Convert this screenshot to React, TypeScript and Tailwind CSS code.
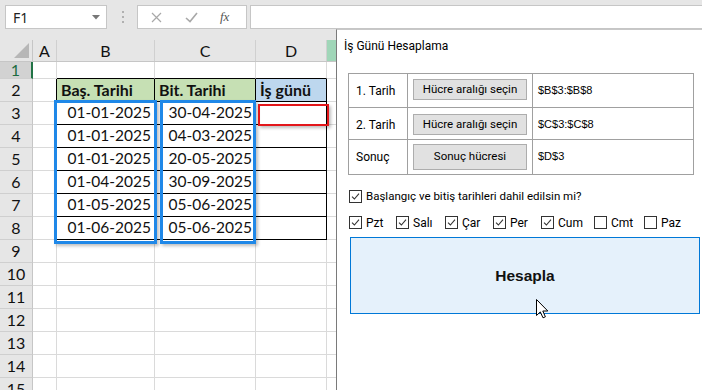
import React from "react";

// column widths in the sheet: A, B, C, D, E (E is mostly under the form)
const COLS = [
  { key: "A", w: 24 },
  { key: "B", w: 98 },
  { key: "C", w: 101 },
  { key: "D", w: 71 },
  { key: "E", w: 60 },
];

const ROW_HEIGHTS = [17, 23, 23, 23, 23, 23, 23, 23, 23, 23, 23, 23, 23, 23, 23];

const START_DATES = ["01-01-2025", "01-01-2025", "01-01-2025", "01-04-2025", "01-05-2025", "01-06-2025"];
const END_DATES = ["30-04-2025", "04-03-2025", "20-05-2025", "30-09-2025", "05-06-2025", "05-06-2025"];

const DAYS = [
  { label: "Pzt", checked: true, w: 47 },
  { label: "Salı", checked: true, w: 49 },
  { label: "Çar", checked: true, w: 48 },
  { label: "Per", checked: true, w: 48 },
  { label: "Cum", checked: true, w: 53 },
  { label: "Cmt", checked: false, w: 50 },
  { label: "Paz", checked: false, w: 50 },
];

const isTableCol = (c: string) => c === "B" || c === "C" || c === "D";

const Cell: React.FC<{ row: number; col: string; w: number; h: number }> = ({ row, col, w, h }) => {
  const inTable = row >= 2 && row <= 8 && isTableCol(col);
  const blackRight = inTable || (col === "A" && row >= 2 && row <= 8);
  const blackBottom = inTable || (row === 1 && isTableCol(col));

  let bg = "bg-white";
  let content: React.ReactNode = null;

  if (row === 2 && col === "B") {
    bg = "bg-[#c6e0b4]";
    content = "Baş. Tarihi";
  } else if (row === 2 && col === "C") {
    bg = "bg-[#c6e0b4]";
    content = "Bit. Tarihi";
  } else if (row === 2 && col === "D") {
    bg = "bg-[#bdd7ee]";
    content = "İş günü";
  } else if (row >= 3 && row <= 8 && col === "B") {
    content = START_DATES[row - 3];
  } else if (row >= 3 && row <= 8 && col === "C") {
    content = END_DATES[row - 3];
  }

  const isHeader = row === 2 && content;

  return (
    <div
      className={`shrink-0 flex items-center border-r border-b ${bg} ${
        blackRight ? "border-r-black" : "border-r-[#dadada]"
      } ${blackBottom ? "border-b-black" : "border-b-[#dadada]"} ${
        isHeader ? "justify-start pl-[4px] font-bold text-[16px]" : "justify-end pr-[3px] text-[15.5px]"
      }`}
      style={{ width: w, height: h }}
    >
      {content}
    </div>
  );
};

const CheckBox: React.FC<{ checked: boolean }> = ({ checked }) => (
  <span className="w-[13px] h-[13px] border border-[#333333] bg-white flex items-center justify-center shrink-0">
    {checked && (
      <svg width="9" height="9" viewBox="0 0 9 9">
        <path d="M1 4.6 L3.4 7 L8 1.6" fill="none" stroke="#333333" strokeWidth="1.1" />
      </svg>
    )}
  </span>
);

const FormButton: React.FC<{ label: string; h: number; mt: number }> = ({ label, h, mt }) => (
  <div
    className="w-[114px] bg-[#e1e1e1] border border-[#adadad] flex items-center justify-center text-[11.5px] text-black"
    style={{ height: h, marginTop: mt }}
  >
    {label}
  </div>
);

const FrameRow: React.FC<{ label: string; button: string; value: string; h: number; btnH: number; btnTop: number; last?: boolean }> = ({
  label,
  button,
  value,
  h,
  btnH,
  btnTop,
  last,
}) => (
  <div className={`flex ${last ? "" : "border-b border-[#a0a0a0]"}`} style={{ height: h }}>
    <div className="w-[59px] border-r border-[#a0a0a0] pl-[7px] pt-[8px] text-[12px]">{label}</div>
    <div className="w-[125px] border-r border-[#a0a0a0] pl-[5px]">
      <FormButton label={button} h={btnH} mt={btnTop} />
    </div>
    <div className="flex-1 pl-[5px] pt-[8px] text-[11px] font-['Liberation_Sans',sans-serif]">{value}</div>
  </div>
);

export default function App() {
  return (
    <div className="w-[702px] h-[390px] overflow-hidden relative bg-white font-['Lato',sans-serif] text-[#111]">
      {/* formula bar */}
      <div className="h-[40px] bg-[#e6e6e6] flex items-start pt-[5px] pl-[5px] font-['Noto_Sans',sans-serif]">
        <div className="w-[102px] h-[24px] bg-white border border-[#c6c6c6] flex items-center justify-between pl-[7px] pr-[6px]">
          <span className="text-[14px] text-[#222]">F1</span>
          <svg width="8" height="5" viewBox="0 0 8 5">
            <path d="M0 0 L8 0 L4 4.5 Z" fill="#777" />
          </svg>
        </div>
        <div className="ml-[15px] mt-[6px] flex flex-col gap-[3px]">
          <span className="w-[2px] h-[2px] bg-[#b0b0b0]" />
          <span className="w-[2px] h-[2px] bg-[#b0b0b0]" />
          <span className="w-[2px] h-[2px] bg-[#b0b0b0]" />
        </div>
        <div className="ml-[13px] w-[110px] h-[24px] bg-white border border-[#c6c6c6] flex items-center">
          <svg className="ml-[13px]" width="11" height="11" viewBox="0 0 11 11">
            <path d="M1 1 L10 10 M10 1 L1 10" stroke="#a8a8a8" strokeWidth="1.2" />
          </svg>
          <svg className="ml-[23px]" width="13" height="11" viewBox="0 0 13 11">
            <path d="M1 6 L5 9.5 L12 1" fill="none" stroke="#a8a8a8" strokeWidth="1.6" />
          </svg>
          <span className="ml-[22px] text-[13px] italic text-[#555] font-['Liberation_Serif',serif]">fx</span>
        </div>
        <div className="ml-[3px] flex-1 h-[24px] bg-white border border-[#c6c6c6] -mr-[4px]" />
      </div>

      {/* column headers */}
      <div className="flex h-[22px] bg-[#e6e6e6] border-b border-[#c6c6c6]">
        <div className="w-[33px] shrink-0 border-r border-[#c6c6c6] relative">
          <svg className="absolute right-[3px] bottom-[3px]" width="15" height="15" viewBox="0 0 15 15">
            <path d="M15 0 L15 15 L0 15 Z" fill="#b7b7b7" />
          </svg>
        </div>
        {COLS.map((c) => (
          <div
            key={c.key}
            className={`shrink-0 flex items-center justify-center text-[16px] border-r border-[#d0d0d0] ${
              c.key === "E" ? "bg-[#a0d6b8]" : ""
            }`}
            style={{ width: c.w }}
          >
            {c.key === "E" ? "" : c.key}
          </div>
        ))}
      </div>

      {/* rows */}
      {ROW_HEIGHTS.map((h, i) => {
        const row = i + 1;
        return (
          <div key={row} className="flex">
            <div
              className={`w-[33px] shrink-0 flex items-center justify-center text-[16px] border-b border-[#cfcfcf] ${
                row === 1
                  ? "bg-[#d2d2d2] border-r-2 border-r-[#217346] text-[#1e6b41]"
                  : "bg-[#e6e6e6] border-r border-r-[#c6c6c6]"
              }`}
              style={{ height: h }}
            >
              {row}
            </div>
            {COLS.map((c) => (
              <Cell key={c.key} row={row} col={c.key} w={c.w} h={h} />
            ))}
          </div>
        );
      })}

      {/* range highlights */}
      <div className="absolute left-[54px] top-[100px] w-[103px] h-[144px] border-[3px] border-[#1f88e8] shadow-[2px_2px_3px_rgba(0,0,0,0.25)]" />
      <div className="absolute left-[160px] top-[100px] w-[96px] h-[144px] border-[3px] border-[#1f88e8] shadow-[2px_2px_3px_rgba(0,0,0,0.25)]" />
      <div className="absolute left-[258px] top-[104px] w-[71px] h-[22px] border-[2.5px] border-[#e3171b] shadow-[2px_2px_3px_rgba(0,0,0,0.25)]" />

      {/* user form window */}
      <div className="absolute left-[336px] top-[29px] right-0 bottom-0 bg-white border-l border-l-[#7a7a7a] border-t border-t-[#c8c8c8] font-['Roboto',sans-serif] text-black">
        <div className="pt-[8px] pl-[7px] h-[24px] text-[12px] leading-[16px]">İş Günü Hesaplama</div>

        <div className="ml-[11px] mt-[19px] w-[346px] border border-[#a0a0a0]">
          <FrameRow label="1. Tarih" button="Hücre aralığı seçin" value="$B$3:$B$8" h={34} btnH={21} btnTop={5} />
          <FrameRow label="2. Tarih" button="Hücre aralığı seçin" value="$C$3:$C$8" h={32} btnH={21} btnTop={6} />
          <FrameRow label="Sonuç" button="Sonuç hücresi" value="$D$3" h={34} btnH={26} btnTop={4} last />
        </div>

        <div className="ml-[12px] mt-[15px] h-[13px] flex items-center gap-[4px] text-[11.5px]">
          <CheckBox checked />
          <span>Başlangıç ve bitiş tarihleri dahil edilsin mi?</span>
        </div>

        <div className="ml-[12px] mt-[13px] h-[13px] flex items-center text-[12px]">
          {DAYS.map((d) => (
            <div key={d.label} className="flex items-center gap-[4px] shrink-0" style={{ width: d.w }}>
              <CheckBox checked={d.checked} />
              <span>{d.label}</span>
            </div>
          ))}
        </div>

        <div className="ml-[13px] mt-[8px] w-[350px] h-[77px] bg-[#e5f1fb] border border-[#0078d7] flex items-center justify-center">
          <span className="text-[15.5px] font-bold font-['Liberation_Sans',sans-serif] text-[#111]">Hesapla</span>
        </div>
      </div>

      {/* mouse pointer */}
      <svg className="absolute left-[536px] top-[299px]" width="13" height="20" viewBox="0 0 13 20">
        <path d="M0.5 0.5 L0.5 16.5 L4.3 12.9 L7 18.8 L9.4 17.8 L6.8 12 L11.8 12 Z" fill="white" stroke="black" strokeWidth="1" strokeLinejoin="round" />
      </svg>
    </div>
  );
}
